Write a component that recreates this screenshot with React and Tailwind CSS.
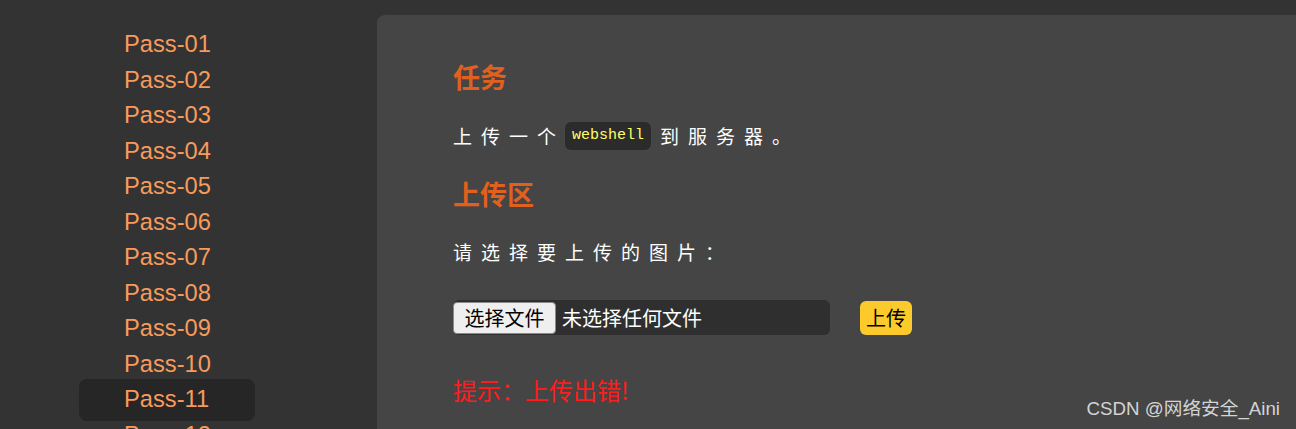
import React from 'react';

const passes = ['01', '02', '03', '04', '05', '06', '07', '08', '09', '10', '11', '12'];
const active = '11';

const cjk = { fontFamily: '"Noto Sans CJK SC", "Liberation Sans", sans-serif' };

export default function App() {
  return (
    <div className="relative h-[429px] overflow-hidden bg-[#333333] flex font-['Liberation_Sans',sans-serif]">
      <aside className="w-[377px] shrink-0 pt-[27px]">
        <ul className="pl-[79px]">
          {passes.map((p) => (
            <li
              key={p}
              className={
                p === active
                  ? 'w-[176px] pl-[45px] text-[23.7px] leading-[35.5px] text-[#f79b5c] bg-[#262626] rounded-[8px] py-[3px] -my-[3px]'
                  : 'w-[176px] pl-[45px] text-[23.7px] leading-[35.5px] text-[#f79b5c]'
              }
            >
              Pass-{p}
            </li>
          ))}
        </ul>
      </aside>

      <main className="flex-1 mt-[15px] bg-[#454545] rounded-tl-[8px] pl-[76px] pt-[46px]" style={cjk}>
        <h2 className="text-[27px] leading-[32px] font-bold text-[#e0601e]">任务</h2>
        <p className="mt-[29px] text-[19px] leading-[28px] text-white tracking-[9px] flex items-center">
          上传一个
          <code className="mr-[9px] px-[7px] rounded-[6px] bg-[#2b2b2b] text-[#ffff66] text-[15px] leading-[28px] tracking-normal font-normal font-['Liberation_Mono',monospace]">
            webshell
          </code>
          到服务器。
        </p>

        <h2 className="mt-[28px] text-[27px] leading-[32px] font-bold text-[#e0601e]">上传区</h2>
        <p className="mt-[28px] text-[19px] leading-[28px] text-white tracking-[9px]">请选择要上传的图片：</p>

        <div className="mt-[34px] flex items-center">
          <div className="w-[377px] h-[35px] bg-[#2f2f2f] rounded-[6px] flex items-center">
            <span className="h-[32px] w-[103px] flex items-center justify-center bg-[#efefef] border border-[#8a8a8a] rounded-[4px] text-[20px] text-black">
              选择文件
            </span>
            <span className="ml-[6px] text-[20px] text-white">未选择任何文件</span>
          </div>
          <button className="ml-[30px] h-[34px] w-[52px] flex items-center justify-center bg-[#fccb2b] rounded-[6px] text-[20px] text-black" style={cjk}>
            上传
          </button>
        </div>

        <p className="mt-[39px] text-[24px] leading-[32px] text-[#ff1c1c]">提示：上传出错!</p>
      </main>

      <div className="absolute right-[16px] bottom-[8px] text-[18.7px] leading-[24px] text-[#d4d4d4]" style={{ fontFamily: '"Liberation Sans", "Noto Sans CJK SC", sans-serif' }}>
        CSDN @网络安全_Aini
      </div>
    </div>
  );
}
